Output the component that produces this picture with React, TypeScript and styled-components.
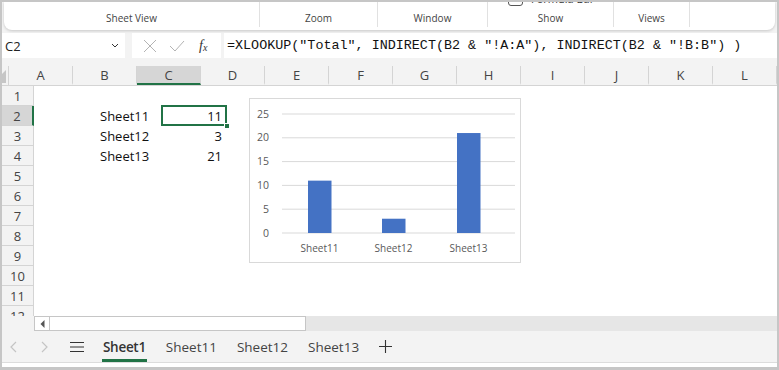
import styled, { createGlobalStyle } from 'styled-components';

const GlobalStyle = createGlobalStyle`
    html, body {
        margin: 0;
        padding: 0;
        background: #ffffff;
    }
    * {
        box-sizing: border-box;
    }
`;

const UI_FONT = `"Open Sans", "Noto Sans", sans-serif`;
const GREEN = '#217346';

const COLUMNS = ['A', 'B', 'C', 'D', 'E', 'F', 'G', 'H', 'I', 'J', 'K', 'L'];
const ROWS = [1, 2, 3, 4, 5, 6, 7, 8, 9, 10, 11, 12];

const DATA: Record<string, string> = {
    B2: 'Sheet11', C2: '11',
    B3: 'Sheet12', C3: '3',
    B4: 'Sheet13', C4: '21',
};

const SERIES = [
    { name: 'Sheet11', value: 11, x: 58 },
    { name: 'Sheet12', value: 3, x: 132 },
    { name: 'Sheet13', value: 21, x: 207 },
];

const RIBBON_GROUPS = [
    { label: 'Sheet View', width: 256 },
    { label: 'Zoom', width: 118 },
    { label: 'Window', width: 110 },
    { label: 'Show', width: 126, hasCheckbox: true },
    { label: 'Views', width: 76 },
];

const FORMULA = '=XLOOKUP("Total", INDIRECT(B2 & "!A:A"), INDIRECT(B2 & "!B:B") )';

const Chart: React.FC = () => {
    const axisY = 134;
    const step = 23.8;
    const unit = step / 5;

    return (
        <ChartBox>
            <svg width="270" height="163" viewBox="0 0 270 163">
                {[0, 5, 10, 15, 20, 25].map((v, i) => (
                    <g key={v}>
                        <line x1="32" x2="265" y1={axisY - i * step} y2={axisY - i * step} stroke="#d9d9d9" strokeWidth="1" />
                        <text x="19" y={axisY - i * step + 3.5} textAnchor="end" fontSize="10.5" fill="#595959" fontFamily={UI_FONT}>{v}</text>
                    </g>
                ))}
                {SERIES.map(s => (
                    <g key={s.name}>
                        <rect x={s.x} y={axisY - s.value * unit} width="23.5" height={s.value * unit} fill="#4472c4" />
                        <text x={s.x + 11.5} y="153" textAnchor="middle" fontSize="10" fill="#595959" fontFamily={UI_FONT}>{s.name}</text>
                    </g>
                ))}
            </svg>
        </ChartBox>
    );
};

const App: React.FC = () => {
    return (
        <>
            <GlobalStyle />
            <Frame>
                <Ribbon>
                    {RIBBON_GROUPS.map(g => (
                        <RibbonGroup key={g.label} width={g.width}>
                            {g.hasCheckbox && (
                                <CheckRow>
                                    <CheckBox />
                                    <span>Formula Bar</span>
                                </CheckRow>
                            )}
                            <GroupLabel>{g.label}</GroupLabel>
                        </RibbonGroup>
                    ))}
                </Ribbon>

                <FormulaRow>
                    <NameBox>
                        <span>C2</span>
                        <svg width="8" height="5" viewBox="0 0 8 5">
                            <path d="M1 1 L4 4 L7 1" fill="none" stroke="#333" strokeWidth="1" />
                        </svg>
                    </NameBox>
                    <FxBox>
                        <svg width="14" height="14" viewBox="0 0 14 14">
                            <path d="M1 1 L13 13 M13 1 L1 13" stroke="#b3b3b3" strokeWidth="1" fill="none" />
                        </svg>
                        <svg width="16" height="12" viewBox="0 0 16 12">
                            <path d="M1 6 L6 11 L15 1" stroke="#b3b3b3" strokeWidth="1" fill="none" />
                        </svg>
                        <FxLabel>f<sub>x</sub></FxLabel>
                    </FxBox>
                    <FormulaInput>{FORMULA}</FormulaInput>
                </FormulaRow>

                <Sheet>
                    <HeaderRow>
                        <Corner />
                        {COLUMNS.map(c => (
                            <ColHeader key={c} selected={c === 'C'}>{c}</ColHeader>
                        ))}
                    </HeaderRow>
                    <Body>
                        <RowHeaders>
                            {ROWS.map(r => (
                                <RowHeader key={r} selected={r === 2}>{r}</RowHeader>
                            ))}
                        </RowHeaders>
                        <Cells>
                            {ROWS.map(r => (
                                <CellRow key={r}>
                                    {COLUMNS.map(c => {
                                        const v = DATA[`${c}${r}`];
                                        const numeric = v !== undefined && !isNaN(Number(v));
                                        return <Cell key={c} numeric={numeric}>{v}</Cell>;
                                    })}
                                </CellRow>
                            ))}
                            <Selection>
                                <Handle />
                            </Selection>
                            <Chart />
                        </Cells>
                    </Body>
                </Sheet>

                <ScrollRow>
                    <ScrollCorner />
                    <ScrollButton>
                        <svg width="5" height="8" viewBox="0 0 5 8">
                            <path d="M4.5 0 L0.5 4 L4.5 8 Z" fill="#555" />
                        </svg>
                    </ScrollButton>
                    <ScrollThumb />
                </ScrollRow>

                <TabBar>
                    <NavIcon>
                        <svg width="8" height="12" viewBox="0 0 8 12">
                            <path d="M7 1 L2 6 L7 11" fill="none" stroke="#c4c4c4" strokeWidth="1.2" />
                        </svg>
                    </NavIcon>
                    <NavIcon>
                        <svg width="8" height="12" viewBox="0 0 8 12">
                            <path d="M1 1 L6 6 L1 11" fill="none" stroke="#c4c4c4" strokeWidth="1.2" />
                        </svg>
                    </NavIcon>
                    <NavIcon>
                        <svg width="14" height="12" viewBox="0 0 14 12">
                            <path d="M0 1.5 H14 M0 6 H14 M0 10.5 H14" stroke="#333" strokeWidth="1.2" />
                        </svg>
                    </NavIcon>
                    <Tabs>
                        <Tab active>Sheet1</Tab>
                        <Tab>Sheet11</Tab>
                        <Tab>Sheet12</Tab>
                        <Tab>Sheet13</Tab>
                        <AddTab>
                            <svg width="13" height="13" viewBox="0 0 13 13">
                                <path d="M6.5 0 V13 M0 6.5 H13" stroke="#333" strokeWidth="1.1" />
                            </svg>
                        </AddTab>
                    </Tabs>
                </TabBar>
                <BottomStrip />
            </Frame>
        </>
    );
};

const Frame = styled.div`
    width: 779px;
    height: 370px;
    border: 2px solid #c6c6c6;
    border-bottom-width: 3px;
    background: #f3f3f3;
    font-family: ${UI_FONT};
    display: flex;
    flex-direction: column;
    overflow: hidden;
`;

const Ribbon = styled.div`
    height: 28px;
    margin: 0 2px;
    background: #ffffff;
    border-radius: 0 0 8px 8px;
    box-shadow: 0 1px 3px rgba(0, 0, 0, 0.18);
    display: flex;
    overflow: hidden;
    flex-shrink: 0;
`;

const RibbonGroup = styled.div<{ width: number }>`
    width: ${props => props.width}px;
    height: 25px;
    border-right: 1px solid #e1e1e1;
    position: relative;
    display: flex;
    flex-direction: column;
    justify-content: flex-end;
    align-items: center;
`;

const GroupLabel = styled.div`
    font-size: 10px;
    line-height: 14px;
    color: #444;
    padding-bottom: 2px;
`;

const CheckRow = styled.div`
    position: absolute;
    left: 20px;
    top: -11px;
    display: flex;
    align-items: center;
    gap: 8px;
    font-size: 11px;
    color: #333;
`;

const CheckBox = styled.div`
    width: 15px;
    height: 15px;
    border: 1px solid #555;
    border-radius: 3px;
`;

const FormulaRow = styled.div`
    height: 25px;
    margin-top: 3px;
    display: flex;
    flex-shrink: 0;
`;

const NameBox = styled.div`
    width: 123px;
    background: #ffffff;
    display: flex;
    align-items: center;
    justify-content: space-between;
    padding: 0 6px 0 3px;
    font-size: 13px;
    color: #222;
`;

const FxBox = styled.div`
    width: 89px;
    margin-left: 7px;
    background: #ffffff;
    display: flex;
    align-items: center;
    padding: 0 8px 0 11px;
    gap: 12px;
`;

const FxLabel = styled.span`
    font-family: "Liberation Serif", serif;
    font-style: italic;
    font-size: 14px;
    color: #333;
    margin-left: 2px;

    sub {
        font-size: 10px;
        vertical-align: baseline;
        position: relative;
        top: 1px;
    }
`;

const FormulaInput = styled.div`
    flex: 1;
    margin-left: 3px;
    background: #ffffff;
    font-family: "Liberation Mono", monospace;
    font-size: 13.4px;
    color: #111;
    line-height: 25px;
    padding-left: 3px;
    white-space: nowrap;
    overflow: hidden;
`;

const Sheet = styled.div`
    margin-top: 8px;
    display: flex;
    flex-direction: column;
    flex-shrink: 0;
`;

const HeaderRow = styled.div`
    display: flex;
    height: 20px;
    background: #f3f3f3;
    border-bottom: 1px solid #d4d4d4;
`;

const Corner = styled.div`
    width: 32px;
    border-right: 1px solid #d4d4d4;
    position: relative;

    &::after {
        content: '';
        position: absolute;
        right: 2px;
        bottom: 2px;
        border-style: solid;
        border-width: 0 0 13px 13px;
        border-color: transparent transparent #c6c6c6 transparent;
    }
`;

const ColHeader = styled.div<{ selected?: boolean }>`
    width: 64px;
    flex-shrink: 0;
    border-right: 1px solid #d4d4d4;
    border-bottom: ${props => props.selected ? `2px solid ${GREEN}` : '2px solid transparent'};
    background: ${props => props.selected ? '#d6d6d6' : 'transparent'};
    color: #444;
    font-size: 13px;
    display: flex;
    align-items: center;
    justify-content: center;
    padding-top: 1px;
`;

const Body = styled.div`
    display: flex;
    height: 230px;
    overflow: hidden;
    background: #ffffff;
`;

const RowHeaders = styled.div`
    width: 32px;
    flex-shrink: 0;
    background: #f3f3f3;
    border-right: 1px solid #d4d4d4;
`;

const RowHeader = styled.div<{ selected?: boolean }>`
    height: 20px;
    border-bottom: 1px solid #d4d4d4;
    border-right: ${props => props.selected ? `2px solid ${GREEN}` : 'none'};
    margin-right: ${props => props.selected ? '-1px' : '0'};
    background: ${props => props.selected ? '#d6d6d6' : 'transparent'};
    color: #444;
    font-size: 13px;
    display: flex;
    align-items: center;
    justify-content: center;
`;

const Cells = styled.div`
    flex: 1;
    position: relative;
`;

const CellRow = styled.div`
    display: flex;
    height: 20px;
`;

const Cell = styled.div<{ numeric?: boolean }>`
    width: 64px;
    flex-shrink: 0;
    font-size: 13px;
    color: #111;
    line-height: 20px;
    padding: 0 4px 0 2px;
    text-align: ${props => props.numeric ? 'right' : 'left'};
    white-space: nowrap;
`;

const Selection = styled.div`
    position: absolute;
    left: 127px;
    top: 19px;
    width: 66px;
    height: 21px;
    border: 2px solid ${GREEN};
`;

const Handle = styled.div`
    position: absolute;
    right: -5px;
    bottom: -5px;
    width: 6px;
    height: 6px;
    background: ${GREEN};
    border: 1px solid #ffffff;
`;

const ChartBox = styled.div`
    position: absolute;
    left: 215px;
    top: 12px;
    width: 272px;
    height: 165px;
    border: 1px solid #d9d9d9;
    background: #ffffff;
`;

const ScrollRow = styled.div`
    display: flex;
    height: 15px;
    background: #e6e6e6;
    flex-shrink: 0;
`;

const ScrollCorner = styled.div`
    width: 32px;
    background: #f3f3f3;
`;

const ScrollButton = styled.div`
    width: 16px;
    background: #ffffff;
    border: 1px solid #c6c6c6;
    display: flex;
    align-items: center;
    justify-content: center;
`;

const ScrollThumb = styled.div`
    width: 256px;
    background: #ffffff;
    border: 1px solid #c6c6c6;
    border-left: none;
`;

const TabBar = styled.div`
    height: 32px;
    display: flex;
    align-items: center;
    gap: 10px;
    background: #f3f3f3;
    border-bottom: 1px solid #dcdcdc;
    flex-shrink: 0;
`;

const NavIcon = styled.div`
    width: 22px;
    display: flex;
    align-items: center;
    justify-content: center;
`;

const Tabs = styled.div`
    height: 100%;
    display: flex;
    align-items: center;
    margin-left: -5px;
`;

const Tab = styled.div<{ active?: boolean }>`
    height: 100%;
    padding: 0 10px;
    display: flex;
    align-items: center;
    font-size: 13.5px;
    font-weight: ${props => props.active ? 600 : 400};
    letter-spacing: ${props => props.active ? '-0.3px' : '0'};
    color: ${props => props.active ? '#333' : '#444'};
    position: relative;

    &::after {
        content: '';
        display: ${props => props.active ? 'block' : 'none'};
        position: absolute;
        left: 9px;
        right: 9px;
        bottom: 0;
        height: 3px;
        background: ${GREEN};
    }
`;

const AddTab = styled.div`
    width: 32px;
    display: flex;
    align-items: center;
    justify-content: center;
`;

const BottomStrip = styled.div`
    flex: 1;
    background: #ffffff;
`;

export default App;
